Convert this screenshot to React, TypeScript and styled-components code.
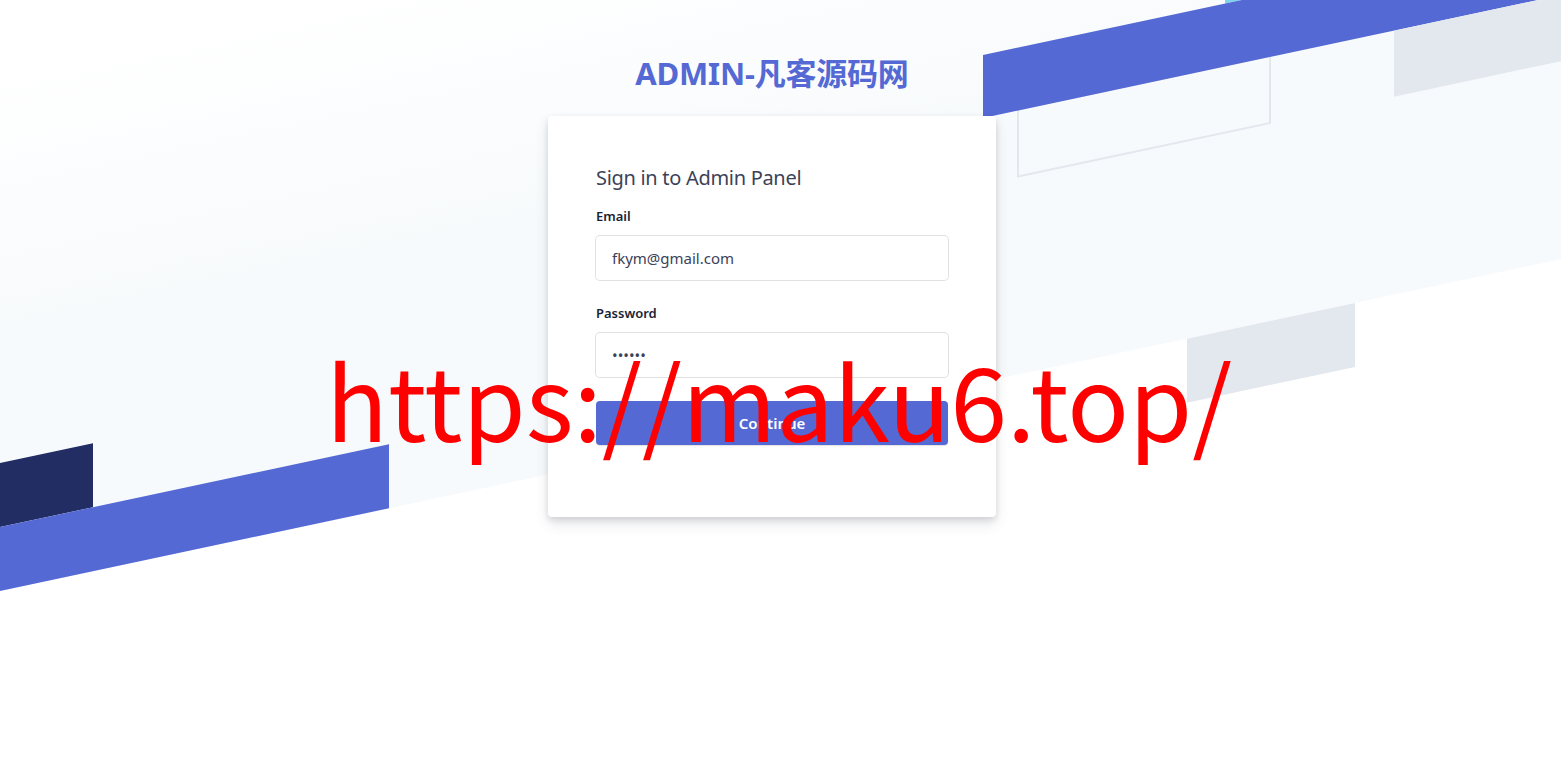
import React from 'react';
import styled, { createGlobalStyle } from 'styled-components';

const GlobalStyle = createGlobalStyle`
  html, body {
    margin: 0;
    padding: 0;
    background: #ffffff;
  }
  body {
    font-family: "Noto Sans", "Noto Sans CJK SC", sans-serif;
    color: #1a1f36;
  }
  * {
    box-sizing: border-box;
  }
`;

const Page = styled.div`
  position: relative;
  min-height: 100vh;
  overflow: hidden;
`;

const Backdrop = styled.svg`
  position: absolute;
  top: 0;
  left: 0;
  width: 100%;
  height: 100%;
  z-index: 0;
`;

// 原页面右侧有滚动条, 内容居中偏左约 8px
const Column = styled.div`
  position: relative;
  z-index: 1;
  display: flex;
  flex-direction: column;
  align-items: center;
  padding-right: 17px;
`;

const TitleBox = styled.div`
  display: flex;
  justify-content: center;
  padding: 53px 0 23px;
`;

const Title = styled.h1`
  margin: 0;
  font-size: 31px;
  line-height: 40px;
  font-weight: 700;
  color: #5469d4;
  letter-spacing: -0.2px;
`;

const Card = styled.div`
  width: 448px;
  padding: 48px;
  background: #ffffff;
  border-radius: 4px;
  box-shadow: rgba(60, 66, 87, 0.12) 0px 7px 14px 0px, rgba(0, 0, 0, 0.12) 0px 3px 6px 0px;
`;

const Heading = styled.span`
  display: block;
  font-size: 20px;
  line-height: 28px;
  padding-bottom: 15px;
  color: #3c4257;
  letter-spacing: -0.3px;
`;

const Field = styled.div`
  padding-bottom: 24px;
`;

const Label = styled.label`
  display: block;
  font-size: 13px;
  line-height: 19px;
  font-weight: 600;
  padding-bottom: 10px;
  color: #1a1f36;
`;

const TextInput = styled.input`
  display: block;
  width: 100%;
  height: 44px;
  padding: 8px 16px;
  border: none;
  border-radius: 4px;
  font-family: inherit;
  font-size: 15px;
  color: #3c4257;
  background: #ffffff;
  box-shadow: rgba(60, 66, 87, 0.16) 0px 0px 0px 1px;
  outline: none;
`;

const Submit = styled.button`
  display: block;
  width: 100%;
  height: 44px;
  border: none;
  border-radius: 4px;
  background: #5469d4;
  color: #ffffff;
  font-family: inherit;
  font-size: 15px;
  font-weight: 600;
  cursor: pointer;
  box-shadow: rgba(0, 0, 0, 0.12) 0px 1px 1px 0px;
`;

const Watermark = styled.div`
  position: absolute;
  left: 326px;
  top: 347px;
  z-index: 5;
  font-family: "Noto Sans CJK SC", sans-serif;
  font-size: 102px;
  line-height: 1;
  color: #ff0000;
  white-space: nowrap;
  pointer-events: none;
`;

// 斜条纹背景, 坐标写在 skewY(-12deg) 的局部坐标里
const stripes = [
  { x: 0, y: 463, w: 93, h: 64, fill: '#212d63' },
  { x: 0, y: 527, w: 389, h: 64, fill: '#5469d4' },
  { x: 1187, y: 591, w: 168, h: 64, fill: '#e3e8ee' },
  { x: 1225, y: 200, w: 336, h: 64, fill: '#7fd3ed' },
  { x: 983, y: 264, w: 578, h: 63, fill: '#5469d4' },
  { x: 1394, y: 327, w: 167, h: 66, fill: '#e3e8ee' },
];

const Background = () => (
  <Backdrop viewBox="0 0 1561 761" preserveAspectRatio="xMinYMin slice">
    <defs>
      <linearGradient id="fade" gradientUnits="userSpaceOnUse" x1="0" y1="70" x2="0" y2="340">
        <stop offset="0" stopColor="#ffffff" />
        <stop offset="1" stopColor="#f7fafc" />
      </linearGradient>
    </defs>
    <g transform="matrix(1 -0.2126 0 1 0 0)">
      <rect x="0" y="-400" width="1561" height="991" fill="url(#fade)" />
      <rect x="1018" y="326" width="252" height="67" fill="none" stroke="#e3e8ee" strokeWidth="2" />
      {stripes.map((s, idx) => (
        <rect key={idx} x={s.x} y={s.y} width={s.w} height={s.h} fill={s.fill} />
      ))}
    </g>
  </Backdrop>
);

const App: React.FC = () => {
  return (
    <Page>
      <GlobalStyle />
      <Background />
      <Column>
        <TitleBox>
          <Title>ADMIN-凡客源码网</Title>
        </TitleBox>
        <Card>
          <Heading>Sign in to Admin Panel</Heading>
          <Field>
            <Label htmlFor="email">Email</Label>
            <TextInput id="email" type="email" defaultValue="fkym@gmail.com" />
          </Field>
          <Field>
            <Label htmlFor="password">Password</Label>
            <TextInput id="password" type="password" defaultValue="123456" />
          </Field>
          <Field>
            <Submit type="button">Continue</Submit>
          </Field>
        </Card>
      </Column>
      <Watermark>https://maku6.top/</Watermark>
    </Page>
  );
};

export default App;
